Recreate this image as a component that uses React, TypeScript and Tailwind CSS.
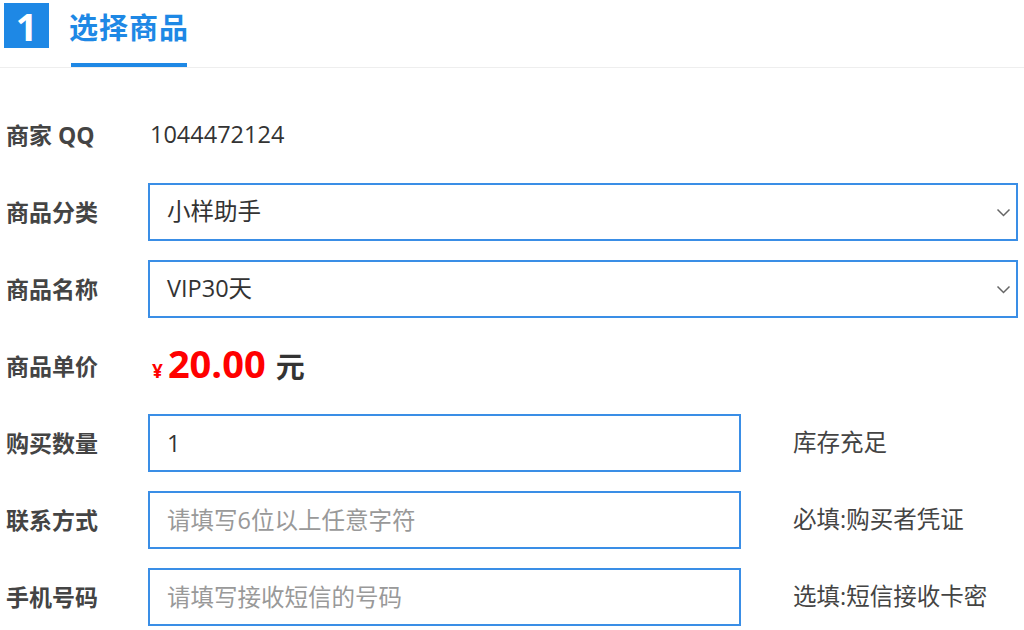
import React from "react";

const font = "font-['Open_Sans','Noto_Sans_CJK_SC',sans-serif]";

const Chevron: React.FC = () => (
  <svg width="15" height="9" viewBox="0 0 15 9" fill="none" className="shrink-0">
    <path d="M1.5 1.5 L7.5 7.5 L13.5 1.5" stroke="#666" strokeWidth="1.5" />
  </svg>
);

const Label: React.FC<{ children: React.ReactNode }> = ({ children }) => (
  <div className="w-[142px] shrink-0 text-[23px] font-bold text-[#444]">{children}</div>
);

const App: React.FC = () => {
  const [qty, setQty] = React.useState("1");
  const [contact, setContact] = React.useState("");
  const [phone, setPhone] = React.useState("");

  return (
    <div className={`w-[1024px] h-[630px] overflow-hidden bg-white ${font}`}>
      {/* header */}
      <div className="flex h-[68px] border-b border-[#eeeeee]">
        <div className="mt-[3px] ml-1 w-[45px] h-[45px] bg-[#1e88e5] flex items-center justify-center text-white text-[38px] font-bold leading-none">
          1
        </div>
        <div className="ml-[20px] flex flex-col justify-between h-full">
          <div className="pt-[10px] text-[29px] font-bold text-[#1e88e5] leading-[36px] tracking-[1px]">
            选择商品
          </div>
          <div className="mx-[2px] h-[4px] bg-[#1e88e5]" />
        </div>
      </div>

      {/* form */}
      <div className="flex flex-col gap-[19px] pt-[38px] pl-[6px] pr-[6px]">
        <div className="flex items-center h-[58px]">
          <Label>商家 QQ</Label>
          <div className="pl-[2px] text-[23.5px] text-[#333]">1044472124</div>
        </div>

        <div className="flex items-center h-[58px]">
          <Label>商品分类</Label>
          <div className="flex-1 h-full border-2 border-[#3a8ee6] flex items-center justify-between pl-[17px] pr-[5px] text-[23.5px] text-[#333]">
            <span>小样助手</span>
            <Chevron />
          </div>
        </div>

        <div className="flex items-center h-[58px]">
          <Label>商品名称</Label>
          <div className="flex-1 h-full border-2 border-[#3a8ee6] flex items-center justify-between pl-[17px] pr-[5px] text-[23.5px] text-[#333]">
            <span>VIP30天</span>
            <Chevron />
          </div>
        </div>

        <div className="flex items-center h-[58px]">
          <Label>商品单价</Label>
          <div className="flex items-baseline pl-[4px]">
            <span className="text-[19px] font-bold text-[#ff0000] mr-[5px]">¥</span>
            <span className="text-[38px] font-bold text-[#ff0000] leading-none">20.00</span>
            <span className="ml-[10px] text-[29px] font-bold text-[#333]">元</span>
          </div>
        </div>

        {[
          { label: "购买数量", value: qty, set: setQty, ph: "", note: "库存充足" },
          { label: "联系方式", value: contact, set: setContact, ph: "请填写6位以上任意字符", note: "必填:购买者凭证" },
          { label: "手机号码", value: phone, set: setPhone, ph: "请填写接收短信的号码", note: "选填:短信接收卡密" },
        ].map((r) => (
          <div key={r.label} className="flex items-center h-[58px]">
            <Label>{r.label}</Label>
            <input
              value={r.value}
              onChange={(e) => r.set(e.target.value)}
              placeholder={r.ph}
              className="w-[593px] h-full border-2 border-[#3a8ee6] pl-[17px] text-[23.5px] text-[#333] placeholder:text-[#999] outline-none"
            />
            <div className="ml-[52px] text-[23.5px] text-[#444]">{r.note}</div>
          </div>
        ))}
      </div>
    </div>
  );
};

export default App;
